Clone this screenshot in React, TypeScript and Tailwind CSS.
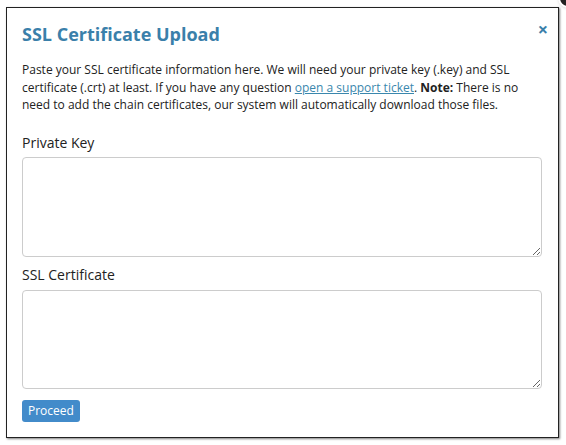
export default function App() {
  return (
    <div className="relative w-[566px] h-[445px] overflow-hidden bg-white" style={{ fontFamily: '"Open Sans", sans-serif' }}>
      {/* lightbox close knob peeking at the corner */}
      <div className="absolute -right-[12px] -top-[12px] w-[20px] h-[20px] rounded-full bg-[#222] border-2 border-white shadow" />

      <div className="ml-[6px] mt-[7px] w-[553px] h-[431px] border border-[#222] bg-white shadow-[1px_1px_2px_rgba(0,0,0,0.5)] pl-[15px] pr-[10px] pt-[13px]">
        <div className="flex items-start justify-between">
          <h1 className="text-[18px] font-bold text-[#3a80aa] leading-[26px]">SSL Certificate Upload</h1>
          <button className="text-[#3a80aa] font-bold text-[18px] leading-none -mt-[1px]">×</button>
        </div>

        <p className="mt-[14px] w-[520px] text-[12px] leading-[17.5px] text-[#222]">
          Paste your SSL certificate information here. We will need your private key (.key) and SSL
          certificate (.crt) at least. If you have any question{" "}
          <a href="#" className="text-[#3a87ad] underline">open a support ticket</a>.{" "}
          <b>Note:</b> There is no need to add the chain certificates, our system will automatically download those files.
        </p>

        <label className="block mt-[19px] text-[14px] text-[#222] leading-[20px]">Private Key</label>
        <textarea className="block mt-[4px] w-[520px] h-[100px] border border-[#ccc] rounded-[4px] resize-y" />

        <label className="block mt-[8px] text-[14px] text-[#222] leading-[20px]">SSL Certificate</label>
        <textarea className="block mt-[5px] w-[520px] h-[99px] border border-[#ccc] rounded-[4px] resize-y" />

        <button className="mt-[11px] h-[22px] px-[6px] rounded-[3px] bg-[#428bca] text-white text-[12px] leading-[22px]">
          Proceed
        </button>
      </div>
    </div>
  );
}
